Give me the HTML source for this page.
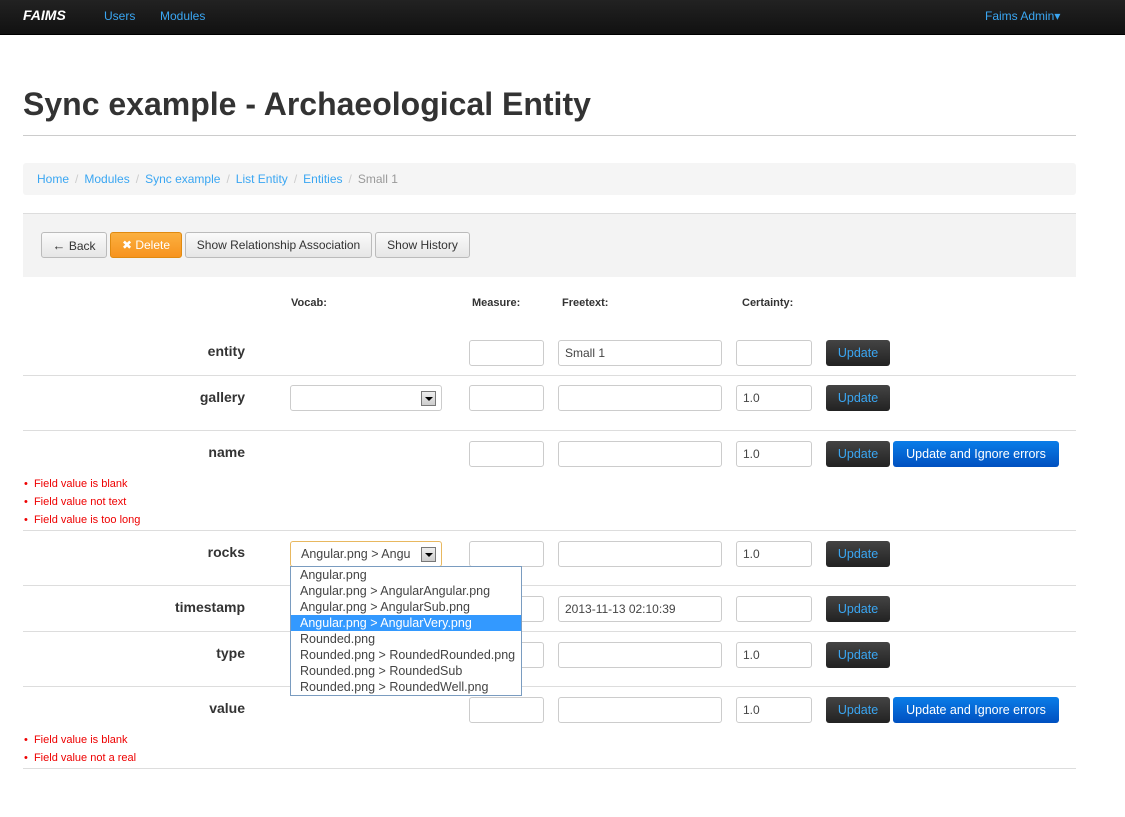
<!DOCTYPE html><html><head><style>
body{margin:0;width:1125px;height:817px;position:relative;font-family:"Liberation Sans",sans-serif;background:#fff;overflow:hidden}
.a{position:absolute}
.nav{left:0;top:0;width:1125px;height:34px;background:linear-gradient(#222,#111);border-bottom:1px solid #000}
.nav span{position:absolute;top:9px;font-size:12px;color:#3aa6f2}
.lbl{position:absolute;font-weight:bold;font-size:14px;color:#333;text-align:right;width:245px;left:0}
.inp{position:absolute;border:1px solid #ccc;border-radius:3px;background:#fff;font-size:12px;color:#444;line-height:24px;padding-left:6px;box-sizing:border-box;height:26px}
.up{position:absolute;width:64px;height:26px;border-radius:3px;background:linear-gradient(#444,#222);color:#3aa6f2;font-size:12.5px;text-align:center;line-height:26px;left:826px}
.ig{position:absolute;width:166px;height:26px;border-radius:3px;background:linear-gradient(#0a7de8,#0050c0);color:#fff;font-size:12.5px;text-align:center;line-height:26px;left:893px}
.ln{position:absolute;left:23px;width:1053px;height:1px;background:#ddd}
.err{position:absolute;left:24px;font-size:11px;color:#e00}
.hd{position:absolute;top:297px;font-size:11px;font-weight:bold;color:#333}
.btn{position:absolute;top:232px;height:26px;border:1px solid #bbb;border-radius:3px;background:linear-gradient(#fafafa,#e6e6e6);font-size:12px;color:#333;line-height:25px;text-align:center;box-sizing:border-box}
.sel{position:absolute;left:290px;width:152px;height:26px;border:1px solid #ccc;border-radius:3px;box-sizing:border-box;background:#fff}
.sel i{position:absolute;right:5px;top:5px;width:15px;height:15px;border:1px solid #777;background:linear-gradient(#eee,#ccc);box-sizing:border-box}
.sel i:after{content:"";position:absolute;left:3px;top:5px;border:4px solid transparent;border-top:4px solid #000;border-bottom:0}
.dd{position:absolute;left:290px;top:566px;width:232px;height:130px;border:1px solid #7a9cc0;background:#fff;box-sizing:border-box;font-size:12.5px;color:#444}
.dd div{height:16px;line-height:16px;padding-left:9px;white-space:nowrap}
.bc b{font-weight:normal;color:#ccc;margin:0 6px}
</style></head><body>
<div class="a nav"><span style="left:23px;top:7px;color:#fff;font-weight:bold;font-style:italic;font-size:14px">FAIMS</span><span style="left:104px">Users</span><span style="left:160px">Modules</span><span style="left:985px">Faims Admin▾</span></div>
<div class="a" style="left:23px;top:86px;font-size:32px;font-weight:bold;color:#333">Sync example - Archaeological Entity</div>
<div class="a" style="left:23px;top:135px;width:1053px;height:1px;background:#ccc"></div>
<div class="a bc" style="left:23px;top:163px;width:1053px;height:32px;background:#f5f5f5;border-radius:3px;font-size:12px;line-height:32px;color:#bbb"><span style="margin-left:14px;color:#3aa6f2">Home</span><b>/</b><span style="color:#3aa6f2">Modules</span><b>/</b><span style="color:#3aa6f2">Sync example</span><b>/</b><span style="color:#3aa6f2">List Entity</span><b>/</b><span style="color:#3aa6f2">Entities</span><b>/</b><span style="color:#999">Small 1</span></div>
<div class="a" style="left:23px;top:213px;width:1053px;height:63px;background:#f3f3f3;border-top:1px solid #ddd"></div>
<div class="btn" style="left:41px;width:66px"><b style="font-size:13px">←</b> Back</div>
<div class="btn" style="left:110px;width:72px;background:linear-gradient(#fbb040,#f7931e);border-color:#e08a10;color:#fff">✖ Delete</div>
<div class="btn" style="left:185px;width:187px">Show Relationship Association</div>
<div class="btn" style="left:375px;width:95px">Show History</div>
<div class="hd" style="left:291px">Vocab:</div><div class="hd" style="left:472px">Measure:</div><div class="hd" style="left:562px">Freetext:</div><div class="hd" style="left:742px">Certainty:</div>

<div class="lbl" style="top:343px">entity</div>
<div class="inp" style="left:469px;top:340px;width:75px"></div><div class="inp" style="left:558px;top:340px;width:164px">Small 1</div><div class="inp" style="left:736px;top:340px;width:76px"></div><div class="up" style="top:340px">Update</div>
<div class="ln" style="top:375px"></div>

<div class="lbl" style="top:389px">gallery</div>
<div class="sel" style="top:385px"><i></i></div>
<div class="inp" style="left:469px;top:385px;width:75px"></div><div class="inp" style="left:558px;top:385px;width:164px"></div><div class="inp" style="left:736px;top:385px;width:76px">1.0</div><div class="up" style="top:385px">Update</div>
<div class="ln" style="top:430px"></div>

<div class="lbl" style="top:444px">name</div>
<div class="inp" style="left:469px;top:441px;width:75px"></div><div class="inp" style="left:558px;top:441px;width:164px"></div><div class="inp" style="left:736px;top:441px;width:76px">1.0</div><div class="up" style="top:441px">Update</div><div class="ig" style="top:441px">Update and Ignore errors</div>
<div class="err" style="top:478px">•&nbsp; Field value is blank</div><div class="err" style="top:496px">•&nbsp; Field value not text</div><div class="err" style="top:514px">•&nbsp; Field value is too long</div>
<div class="ln" style="top:530px"></div>

<div class="lbl" style="top:544px">rocks</div>
<div class="sel" style="top:541px;border-color:#e8b860;font-size:12.5px;color:#444;line-height:24px;padding-left:10px;overflow:hidden">Angular.png &gt; Angu<i></i></div>
<div class="inp" style="left:469px;top:541px;width:75px"></div><div class="inp" style="left:558px;top:541px;width:164px"></div><div class="inp" style="left:736px;top:541px;width:76px">1.0</div><div class="up" style="top:541px">Update</div>
<div class="ln" style="top:585px"></div>

<div class="lbl" style="top:599px">timestamp</div>
<div class="inp" style="left:469px;top:596px;width:75px"></div><div class="inp" style="left:558px;top:596px;width:164px">2013-11-13 02:10:39</div><div class="inp" style="left:736px;top:596px;width:76px"></div><div class="up" style="top:596px">Update</div>
<div class="ln" style="top:631px"></div>

<div class="lbl" style="top:645px">type</div>
<div class="inp" style="left:469px;top:642px;width:75px"></div><div class="inp" style="left:558px;top:642px;width:164px"></div><div class="inp" style="left:736px;top:642px;width:76px">1.0</div><div class="up" style="top:642px">Update</div>
<div class="ln" style="top:686px"></div>

<div class="lbl" style="top:700px">value</div>
<div class="inp" style="left:469px;top:697px;width:75px"></div><div class="inp" style="left:558px;top:697px;width:164px"></div><div class="inp" style="left:736px;top:697px;width:76px">1.0</div><div class="up" style="top:697px">Update</div><div class="ig" style="top:697px">Update and Ignore errors</div>
<div class="err" style="top:734px">•&nbsp; Field value is blank</div><div class="err" style="top:752px">•&nbsp; Field value not a real</div>
<div class="ln" style="top:768px"></div>

<div class="dd"><div>Angular.png</div><div>Angular.png &gt; AngularAngular.png</div><div>Angular.png &gt; AngularSub.png</div><div style="background:#3399ff;color:#fff">Angular.png &gt; AngularVery.png</div><div>Rounded.png</div><div>Rounded.png &gt; RoundedRounded.png</div><div>Rounded.png &gt; RoundedSub</div><div>Rounded.png &gt; RoundedWell.png</div></div>
</body></html>
